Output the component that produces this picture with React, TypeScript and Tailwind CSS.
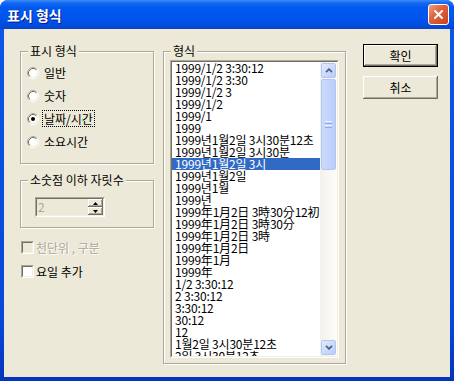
import React from "react";

const items = [
  "1999/1/2 3:30:12",
  "1999/1/2 3:30",
  "1999/1/2 3",
  "1999/1/2",
  "1999/1",
  "1999",
  "1999년1월2일 3시30분12초",
  "1999년1월2일 3시30분",
  "1999년1월2일 3시",
  "1999년1월2일",
  "1999년1월",
  "1999년",
  "1999年1月2日 3時30分12初",
  "1999年1月2日 3時30分",
  "1999年1月2日 3時",
  "1999年1月2日",
  "1999年1月",
  "1999年",
  "1/2 3:30:12",
  "2 3:30:12",
  "3:30:12",
  "30:12",
  "12",
  "1월2일 3시30분12초",
  "2일 3시30분12초",
];

function Radio({ checked }: { checked?: boolean }) {
  return (
    <svg width="12" height="12" viewBox="0 0 12 12" className="shrink-0">
      <circle cx="6" cy="6" r="4.2" fill="#fff" />
      <circle cx="6" cy="6" r="5.5" fill="none" stroke="#fff" />
      <path d="M9.89 2.11A5.5 5.5 0 0 0 2.11 9.89" fill="none" stroke="#ACA899" />
      <circle cx="6" cy="6" r="4.5" fill="none" stroke="#F1EFE2" />
      <path d="M9.18 2.82A4.5 4.5 0 0 0 2.82 9.18" fill="none" stroke="#716F64" />
      {checked && <circle cx="6" cy="6" r="2" fill="#000" />}
    </svg>
  );
}

function Check({ disabled }: { disabled?: boolean }) {
  return (
    <div className="w-[13px] h-[13px] shrink-0 border border-t-[#ACA899] border-l-[#ACA899] border-b-white border-r-white">
      <div
        className={
          disabled
            ? "w-full h-full border border-t-[#716F64] border-l-[#716F64] border-b-[#F1EFE2] border-r-[#F1EFE2] bg-[#ECE9D8]"
            : "w-full h-full border border-t-[#716F64] border-l-[#716F64] border-b-[#F1EFE2] border-r-[#F1EFE2] bg-white"
        }
      />
    </div>
  );
}

function SpinBtn({ up }: { up?: boolean }) {
  return (
    <div className="h-[8px] w-full flex items-center justify-center bg-[#ECE9D8] shadow-[inset_-1px_-1px_0_#716F64,inset_1px_1px_0_#fff,inset_-2px_-2px_0_#ACA899]">
      <svg width="5" height="3" viewBox="0 0 5 3" className={up ? "" : "rotate-180"}>
        <polygon points="2.5,0 5,3 0,3" fill="#000" />
      </svg>
    </div>
  );
}

function ScrollBtn({ up }: { up?: boolean }) {
  return (
    <div className="h-[17px] w-[17px] p-[1px] shrink-0">
      <div className="w-full h-full rounded-[2px] border border-[#B3C6F2] bg-linear-to-br from-[#E1EAFE] to-[#B9CCF8] flex items-center justify-center">
        <svg width="8" height="5" viewBox="0 0 8 5">
          {up ? (
            <polyline points="1,4.2 4,1.2 7,4.2" fill="none" stroke="#4D6185" strokeWidth="1.8" />
          ) : (
            <polyline points="1,0.8 4,3.8 7,0.8" fill="none" stroke="#4D6185" strokeWidth="1.8" />
          )}
        </svg>
      </div>
    </div>
  );
}

export default function App() {
  const ui = "font-['Noto_Sans_CJK_KR',sans-serif] text-[12px]";
  return (
    <div className="w-[454px] h-[381px] bg-white">
      <div className="w-[454px] h-[381px] rounded-t-[8px] overflow-hidden flex flex-col bg-[linear-gradient(180deg,#0B58E8,#0848D8_85%,#0534BC)]">
        {/* title bar */}
        <div className="h-[29px] shrink-0 flex items-center justify-between pl-[7px] pr-[5px] bg-[linear-gradient(180deg,#3D8CF8_0px,#1468F2_3px,#0058EE_8px,#0056EC_18px,#004CE0_25px,#0A42C8_29px)]">
          <span className="font-['Noto_Sans_CJK_KR',sans-serif] text-[14px] font-bold leading-[16px] text-white [text-shadow:1px_1px_0_#0A1883]">
            표시 형식
          </span>
          <div className="w-[21px] h-[21px] rounded-[3px] border border-white bg-[linear-gradient(135deg,#F0A080,#E0643E_40%,#C8401C)] flex items-center justify-center">
            <svg width="11" height="11" viewBox="0 0 11 11">
              <path d="M2 2L9 9M9 2L2 9" stroke="#fff" strokeWidth="2" strokeLinecap="round" />
            </svg>
          </div>
        </div>

        {/* client */}
        <div className={`flex-1 mx-[4px] mb-[4px] bg-[#ECE9D8] flex items-start pt-[15px] pl-[16px] text-black ${ui}`}>
          {/* left column */}
          <div className="w-[134px] mt-[7px] flex flex-col">
            <div className="relative h-[113px] border border-[#ACA899] shadow-[inset_1px_1px_0_#fff,1px_1px_0_#fff] pt-[9px] pl-[6px]">
              <span className="absolute left-[7px] -top-[8px] px-[2px] bg-[#ECE9D8] leading-[14px]">표시 형식</span>
              <div className="flex items-center h-[23px]">
                <Radio />
                <span className="ml-[5px] leading-[15px]">일반</span>
              </div>
              <div className="flex items-center h-[23px]">
                <Radio />
                <span className="ml-[5px] leading-[15px]">숫자</span>
              </div>
              <div className="flex items-center h-[23px]">
                <Radio checked />
                <span className="ml-[3px] px-[1px] border border-dotted border-black leading-[15px]">날짜/시간</span>
              </div>
              <div className="flex items-center h-[23px]">
                <Radio />
                <span className="ml-[5px] leading-[15px]">소요시간</span>
              </div>
            </div>

            <div className="relative mt-[16px] h-[48px] border border-[#ACA899] shadow-[inset_1px_1px_0_#fff,1px_1px_0_#fff] pt-[16px] pl-[14px]">
              <span className="absolute left-[7px] -top-[8px] px-[2px] bg-[#ECE9D8] leading-[14px]">소숫점 이하 자릿수</span>
              <div className="w-[70px] h-[20px] border border-t-[#ACA899] border-l-[#ACA899] border-b-white border-r-white">
                <div className="w-full h-full border border-t-[#716F64] border-l-[#716F64] border-b-[#F1EFE2] border-r-[#F1EFE2] bg-[#ECE9D8] flex">
                  <span className="flex-1 pl-[1px] leading-[16px] text-[#ACA899]">2</span>
                  <div className="w-[15px] flex flex-col">
                    <SpinBtn up />
                    <SpinBtn />
                  </div>
                </div>
              </div>
            </div>

            <div className="mt-[13px] h-[13px] flex items-center pl-[1px]">
              <Check disabled />
              <span className="ml-[2px] leading-[15px] text-[#ACA899] [text-shadow:1px_1px_0_#fff]">천단위 , 구분</span>
            </div>
            <div className="mt-[11px] h-[13px] flex items-center pl-[1px]">
              <Check />
              <span className="ml-[2px] leading-[15px]">요일 추가</span>
            </div>
          </div>

          {/* middle group */}
          <div className="relative ml-[9px] mt-[7px] w-[183px] h-[313px] border border-[#ACA899] shadow-[inset_1px_1px_0_#fff,1px_1px_0_#fff] pt-[8px] pl-[6px]">
            <span className="absolute left-[7px] -top-[8px] px-[2px] bg-[#ECE9D8] leading-[14px]">형식</span>
            <div className="w-[169px] h-[298px] border border-t-[#ACA899] border-l-[#ACA899] border-b-white border-r-white">
              <div className="w-full h-full border border-t-[#716F64] border-l-[#716F64] border-b-[#F1EFE2] border-r-[#F1EFE2] flex">
                <div className="flex-1 bg-white overflow-hidden">
                  {items.map((t, i) => (
                    <div
                      key={i}
                      className={
                        i === 8
                          ? "h-[12px] leading-[12px] pl-[3px] whitespace-nowrap tracking-[-0.2px] bg-[#316AC5] text-white"
                          : "h-[12px] leading-[12px] pl-[3px] whitespace-nowrap tracking-[-0.2px]"
                      }
                    >
                      {t}
                    </div>
                  ))}
                </div>
                {/* scrollbar */}
                <div className="w-[17px] flex flex-col bg-linear-to-r from-[#F3F1EA] to-[#FDFDFA]">
                  <ScrollBtn up />
                  <div className="h-[91px] w-[17px] px-[1px] shrink-0">
                    <div className="w-full h-full rounded-[2px] border border-[#B3C6F2] bg-linear-to-r from-[#CADAFC] to-[#BACEF8] flex flex-col items-center justify-center gap-[1px]">
                      <div className="w-[7px] h-[1px] bg-[#EEF4FE]" />
                      <div className="w-[7px] h-[1px] bg-[#8CACEF]" />
                      <div className="w-[7px] h-[1px] bg-[#EEF4FE]" />
                      <div className="w-[7px] h-[1px] bg-[#8CACEF]" />
                    </div>
                  </div>
                  <div className="flex-1" />
                  <ScrollBtn />
                </div>
              </div>
            </div>
          </div>

          {/* buttons */}
          <div className="ml-[17px] w-[75px] flex flex-col">
            <div className="h-[23px] border border-black">
              <div className="w-full h-full flex items-center justify-center bg-[#ECE9D8] shadow-[inset_-1px_-1px_0_#716F64,inset_1px_1px_0_#fff,inset_-2px_-2px_0_#ACA899]">
                확인
              </div>
            </div>
            <div className="mt-[9px] h-[23px] flex items-center justify-center bg-[#ECE9D8] shadow-[inset_-1px_-1px_0_#716F64,inset_1px_1px_0_#fff,inset_-2px_-2px_0_#ACA899]">
              취소
            </div>
          </div>
        </div>
      </div>
    </div>
  );
}
